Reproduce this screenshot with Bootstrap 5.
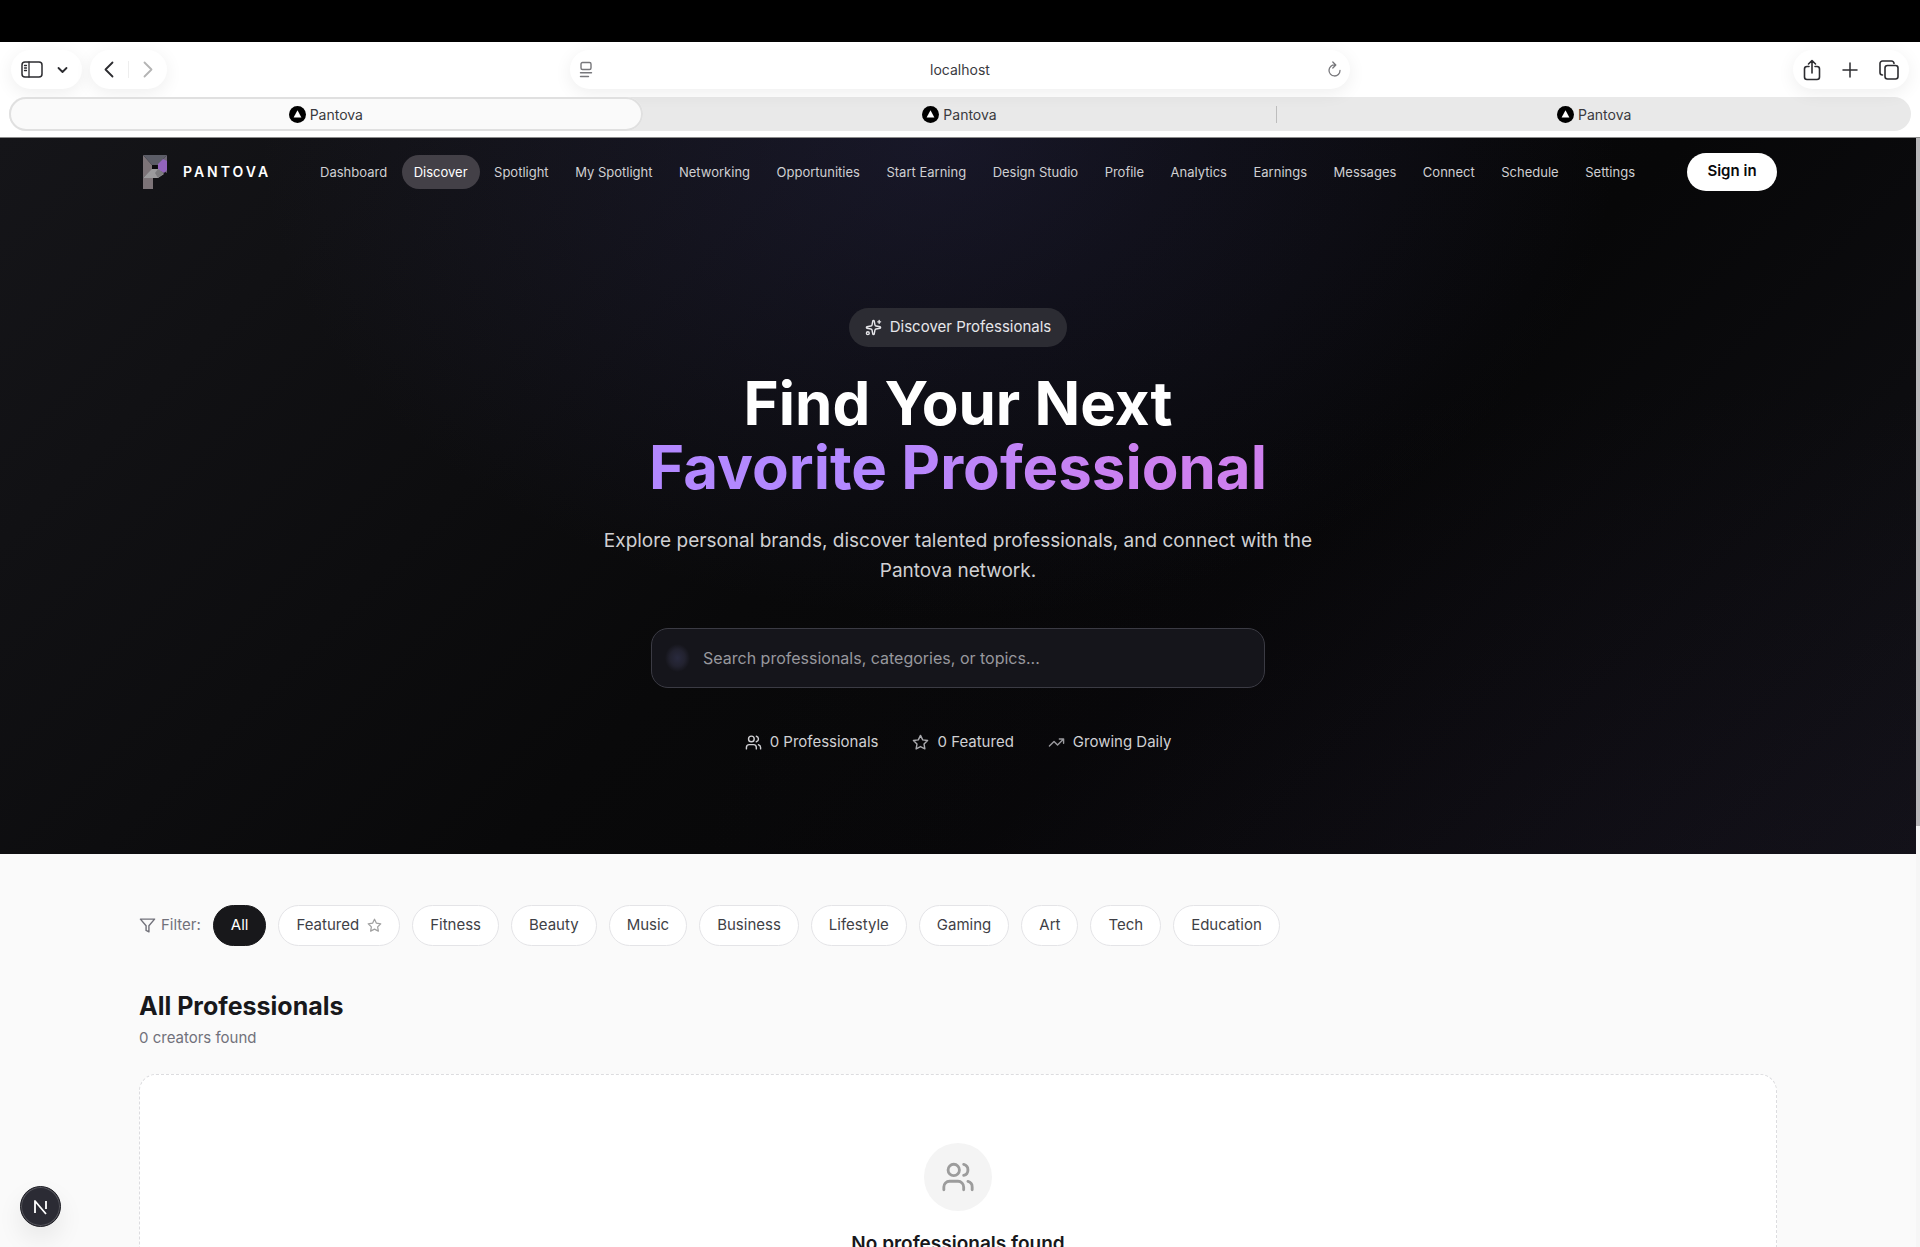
<!DOCTYPE html>
<html lang="en">
<head>
<meta charset="utf-8">
<meta name="viewport" content="width=device-width, initial-scale=1">
<title>Pantova</title>
<link href="https://cdn.jsdelivr.net/npm/bootstrap@5.3.0/dist/css/bootstrap.min.css" rel="stylesheet">
<style>
  body { font-family: "Inter", "Liberation Sans", sans-serif; background: #fafafa; color: #18181b; }
  button, input { font-family: inherit; }
  svg { flex: none; fill: none; stroke: currentColor; stroke-width: 2; stroke-linecap: round; stroke-linejoin: round; }

  /* Browser window */
  .screen-top { height: 42px; background: #000; }
  .browser-bar { background: #fff; color: #2c2c30; height: 96px; padding: 8px 9px 6px; border-bottom: 1px solid #8b8b8b; }
  .tool-row { display: grid; grid-template-columns: 1fr 780px 1fr; height: 39px; padding: 0 2px; }
  .tool-pill { background: #fff; border-radius: 20px; height: 39px; box-shadow: 0 4px 18px rgba(0,0,0,.07); }
  .tool-pill button { border: 0; background: none; padding: 0; color: inherit; display: flex; }
  .pill-side { width: 71px; padding: 0 14px 0 10px; }
  .pill-back { width: 77px; padding: 0 14px; }
  .pill-tools { width: 116px; padding: 0 10px; }
  .address-text { border: 0; background: none; text-align: center; font-size: 14px; color: #3a3a3e; min-width: 0; outline: 0; }
  .tab-strip { background: #e9e9e9; border-radius: 17px; height: 34px; margin-top: 8px; }
  .tab-item { flex: 1 1 0; font-size: 14px; color: #3a3a3e; text-decoration: none; border-radius: 17px; }
  .tab-item.current { background: #fafafa; box-shadow: inset 0 0 0 2px #e0e0e0; }
  .tab-rule { width: 1px; height: 17px; background: #bdbdbd; }

  /* Page */
  .page-wrap { max-width: 1638px; margin: 0 auto; width: 100%; }
  .scroll-track { width: 4px; background: #f6f6f6; }
  .scroll-thumb { height: 688px; background: #b9b8ba; }
  .hero-band { height: 716px; color: #fff;
    background:
      radial-gradient(ellipse 680px 480px at 49% 0, rgba(60,58,120,.25), transparent),
      radial-gradient(ellipse 1000px 480px at 88% 100%, rgba(50,25,80,.07), transparent),
      linear-gradient(135deg, #151519 0, #09090a 46%, #070708 64%, #111116 100%); }
  .site-bar { height: 67px; }
  .wordmark { font-size: 14px; font-weight: 600; letter-spacing: 3px; color: #fff; }
  .site-links { margin-left: 37px; margin-right: 40px; }
  .site-links a { font-size: 13px; line-height: 34px; padding: 0 12px; border-radius: 17px; color: #cfcfd2; text-decoration: none; white-space: nowrap; }
  .site-links a.current { background: #434047; color: #fff; }
  .signin-btn { background: #fff; color: #09090b; height: 38px; width: 90px; border-radius: 19px; border: 0; font-size: 15px; font-weight: 600; }
  .hero-body { padding-top: 103px; }
  .hero-tag { height: 39px; padding: 0 16px; border-radius: 20px; background: #2c2c33; color: #e6e6ea; font-size: 15px; gap: 8px; }
  .hero-title { font-size: 60px; line-height: 64px; font-weight: 700; margin: 24px 0 0; }
  .hero-title span { background: linear-gradient(90deg, #b388ff 0, #b388ff 35%, #cc80ef 80%, #cf80ee 100%); -webkit-background-clip: text; background-clip: text; color: transparent; }
  .hero-sub { max-width: 720px; font-size: 19px; line-height: 30px; margin: 27px 0 0; color: #d0d0d3; }
  .search-box { width: 614px; max-width: 100%; height: 60px; border: 1px solid #3b3b44; border-radius: 17px; background: #15151b; margin-top: 42px; padding: 0 17px 0 13px; gap: 11px; }
  .search-box input { flex: 1; background: none; border: 0; outline: 0; color: #fff; font-size: 16px; }
  .search-box input::placeholder { color: #98989e; opacity: 1; }
  .search-glow { width: 25px; height: 28px; border-radius: 50%; background: radial-gradient(closest-side, #292a3e, #22222f 60%, transparent); }
  .hero-stats { margin-top: 43px; gap: 34px; font-size: 15px; line-height: 22px; color: #d0d0d3; }
  .hero-stats div { gap: 8px; }

  .listing { padding-top: 51px; }
  .filter-row { gap: 12px; }
  .filter-label { font-size: 15px; color: #71717a; gap: 5px; }
  .filter-btn { height: 41px; padding: 0 17px; border-radius: 21px; border: 1px solid #e4e4e7; background: #fff; color: #3f3f46; font-size: 15px; gap: 8px; }
  .filter-btn.current { background: #18181b; border-color: #18181b; color: #fff; }
  .list-title { font-size: 25px; line-height: 34px; font-weight: 700; margin: 43px 0 0; }
  .list-count { font-size: 15px; line-height: 22px; margin: 4px 0 0; color: #71717a; }
  .empty-card { background: #fff; border: 1px dashed #dcdcdf; border-radius: 17px; margin-top: 25px; padding: 68px 0; }
  .empty-icon { width: 68px; height: 68px; border-radius: 50%; background: #f4f4f4; color: #9c9c9c; }
  .empty-title { font-size: 19px; line-height: 30px; font-weight: 600; margin: 18px 0 0; }
  .dev-badge { position: fixed; left: 20px; bottom: 20px; width: 41px; height: 41px; border-radius: 50%; border: 1px solid #1f1f26; background: #2b2b34; color: #fff; padding: 0; box-shadow: inset 0 0 0 1px #55555c, 0 12px 26px rgba(0,0,0,.08); }
</style>
</head>
<body class="vh-100 overflow-hidden d-flex flex-column">
<svg width="0" height="0" class="position-absolute" aria-hidden="true">
  <symbol id="users" viewBox="0 0 24 24"><path d="M16 21v-2a4 4 0 0 0-4-4H6a4 4 0 0 0-4 4v2"/><circle cx="9" cy="7" r="4"/><path d="M22 21v-2a4 4 0 0 0-3-3.87M16 3.13a4 4 0 0 1 0 7.75"/></symbol>
  <symbol id="star" viewBox="0 0 24 24"><path d="M12 2l3.09 6.26L22 9.27l-5 4.87 1.18 6.88L12 17.77l-6.18 3.25L7 14.14 2 9.27l6.91-1.01z"/></symbol>
  <symbol id="favicon" viewBox="0 0 17 17"><circle cx="8.5" cy="8.5" r="8.5" fill="#000" stroke="none"/><path d="M8.500 4.300l3.900 7.200h-7.800z" fill="#fff" stroke="none"/></symbol>
</svg>

<div class="screen-top flex-shrink-0"></div>
<header class="browser-bar flex-shrink-0">
  <div class="tool-row">
    <div class="d-flex gap-2">
      <div class="tool-pill pill-side d-flex align-items-center justify-content-between">
        <button aria-label="Sidebar"><svg width="22" height="17" viewBox="0 0 22 17"><rect x="1" y="1" width="20" height="15" rx="3" stroke-width="1.500"/><path d="M8 1v15M3.500 4.500h2M3.500 7h2M3.500 9.500h2" stroke-width="1.300"/></svg></button>
        <button aria-label="Tab groups"><svg width="11" height="8" viewBox="0 0 11 8"><path d="M1.500 2l4 4 4-4" stroke-width="1.800"/></svg></button>
      </div>
      <div class="tool-pill pill-back d-flex align-items-center justify-content-between">
        <button aria-label="Back"><svg width="10" height="17" viewBox="0 0 10 17"><path d="M8.500 1.500l-7 7 7 7" stroke-width="1.800"/></svg></button>
        <span class="tab-rule opacity-25"></span>
        <button aria-label="Forward"><svg width="10" height="17" viewBox="0 0 10 17"><path d="M1.500 1.500l7 7-7 7" stroke="#b4b4b4" stroke-width="1.800"/></svg></button>
      </div>
    </div>
    <div class="tool-pill d-flex align-items-center px-2">
      <button aria-label="Page menu"><svg width="15" height="17" viewBox="0 0 15 17" color="#77777b"><path d="M4.500 1.500h7a1.500 1.500 0 0 1 1.500 1.500v4a1.500 1.500 0 0 1-1.500 1.500h-7A1.500 1.500 0 0 1 3 7V3a1.500 1.500 0 0 1 1.500-1.500zM2.500 11.800h11M2.500 15.500h8" stroke-width="1.400"/></svg></button>
      <input class="address-text flex-fill" type="text" value="localhost" aria-label="Address">
      <button aria-label="Reload"><svg width="15" height="17" viewBox="0 0 15 17" color="#77777b"><path d="M13 9.500A5.500 5.500 0 1 1 8 4M5.800 1l3 3-3 3" stroke-width="1.300"/></svg></button>
    </div>
    <div class="d-flex justify-content-end">
      <div class="tool-pill pill-tools d-flex align-items-center justify-content-between">
        <button aria-label="Share"><svg width="18" height="22" viewBox="0 0 18 22"><path d="M6 7.500H4A2.500 2.500 0 0 0 1.500 10v8A2.500 2.500 0 0 0 4 20.500h10a2.500 2.500 0 0 0 2.500-2.500v-8A2.500 2.500 0 0 0 14 7.500h-2M9 14V1.500M5.500 5L9 1.500 12.500 5" stroke-width="1.600"/></svg></button>
        <button aria-label="New tab"><svg width="16" height="16" viewBox="0 0 16 16"><path d="M8 1v14M1 8h14" stroke-width="1.500"/></svg></button>
        <button aria-label="Tab overview"><svg width="20" height="20" viewBox="0 0 20 20"><rect x="6" y="5.500" width="13" height="13.500" rx="2.500" stroke-width="1.600"/><path d="M3.500 15A2.500 2.500 0 0 1 1 12.500V3.500A2.500 2.500 0 0 1 3.500 1h9A2.500 2.500 0 0 1 15 3.500" stroke-width="1.600"/></svg></button>
      </div>
    </div>
  </div>
  <nav class="tab-strip d-flex align-items-center" aria-label="Tabs">
    <a href="#" class="tab-item current h-100 d-flex align-items-center justify-content-center gap-1"><svg width="17" height="17"><use href="#favicon"/></svg>Pantova</a>
    <a href="#" class="tab-item h-100 d-flex align-items-center justify-content-center gap-1"><svg width="17" height="17"><use href="#favicon"/></svg>Pantova</a>
    <span class="tab-rule"></span>
    <a href="#" class="tab-item h-100 d-flex align-items-center justify-content-center gap-1"><svg width="17" height="17"><use href="#favicon"/></svg>Pantova</a>
  </nav>
</header>

<div class="d-flex flex-fill overflow-hidden">
  <main class="flex-fill overflow-hidden">
    <section class="hero-band">
      <div class="site-bar page-wrap d-flex align-items-center">
        <a href="#" class="d-flex align-items-center text-decoration-none ps-1">
          <svg width="24" height="34" viewBox="0 0 24 34" class="me-3">
            <g stroke="none"><path d="M0 0l9 10v5L0 23z" fill="#7d7478"/><path d="M0 0h24l-9 10H9z" fill="#5c5d67"/><path d="M24 0v18l-9-5v-3z" fill="#6d6775"/><path d="M20 4l4 2v9l-3 3-6-3V9z" fill="#9364bd"/><path d="M9 14h6l6 5-6 4H0z" fill="#9c9b9d"/><path d="M15 14l6 4-6 5-3-5z" fill="#7c7b7e"/><path d="M9 10h5v4H9z" fill="#0c0c0f"/><path d="M0 23h10v11H0z" fill="#7d7478"/></g>
          </svg>
          <span class="wordmark">PANTOVA</span>
        </a>
        <nav class="site-links d-flex flex-fill justify-content-between" aria-label="Main">
          <a href="#">Dashboard</a><a href="#" class="current">Discover</a><a href="#">Spotlight</a><a href="#">My Spotlight</a><a href="#">Networking</a><a href="#">Opportunities</a><a href="#">Start Earning</a><a href="#">Design Studio</a><a href="#">Profile</a><a href="#">Analytics</a><a href="#">Earnings</a><a href="#">Messages</a><a href="#">Connect</a><a href="#">Schedule</a><a href="#">Settings</a>
        </nav>
        <button class="signin-btn flex-shrink-0">Sign in</button>
      </div>
      <div class="hero-body d-flex flex-column align-items-center text-center">
        <div class="hero-tag d-flex align-items-center">
          <svg width="17" height="17" viewBox="0 0 24 24"><path d="M11.017 2.814a1 1 0 0 1 1.966 0l1.051 5.558a2 2 0 0 0 1.594 1.594l5.558 1.051a1 1 0 0 1 0 1.966l-5.558 1.051a2 2 0 0 0-1.594 1.594l-1.051 5.558a1 1 0 0 1-1.966 0l-1.051-5.558a2 2 0 0 0-1.594-1.594l-5.558-1.051a1 1 0 0 1 0-1.966l5.558-1.051a2 2 0 0 0 1.594-1.594zM20 2v4M22 4h-4"/><circle cx="4" cy="20" r="2"/></svg>
          Discover Professionals
        </div>
        <h1 class="hero-title">Find Your Next<br><span>Favorite Professional</span></h1>
        <p class="hero-sub">Explore personal brands, discover talented professionals, and connect with the Pantova network.</p>
        <div class="search-box d-flex align-items-center">
          <span class="search-glow"></span>
          <input type="search" placeholder="Search professionals, categories, or topics..." aria-label="Search professionals">
        </div>
        <div class="hero-stats d-flex">
          <div class="d-flex align-items-center"><svg width="17" height="17"><use href="#users"/></svg>0 Professionals</div>
          <div class="d-flex align-items-center"><svg width="17" height="17" color="#aaaaae"><use href="#star"/></svg>0 Featured</div>
          <div class="d-flex align-items-center"><svg width="17" height="17" viewBox="0 0 24 24" color="#9a9a9e"><path d="M22 7l-8.500 8.500-5-5L2 17M16 7h6v6"/></svg>Growing Daily</div>
        </div>
      </div>
    </section>

    <section class="listing page-wrap">
      <div class="filter-row d-flex align-items-center">
        <span class="filter-label d-flex align-items-center"><svg width="17" height="17" viewBox="0 0 24 24"><path d="M22 3H2l8 9.460V19l4 2v-8.540z"/></svg>Filter:</span>
        <button class="filter-btn current">All</button>
        <button class="filter-btn d-flex align-items-center">Featured <svg width="15" height="15" color="#a0a0a0"><use href="#star"/></svg></button>
        <button class="filter-btn">Fitness</button>
        <button class="filter-btn">Beauty</button>
        <button class="filter-btn">Music</button>
        <button class="filter-btn">Business</button>
        <button class="filter-btn">Lifestyle</button>
        <button class="filter-btn">Gaming</button>
        <button class="filter-btn">Art</button>
        <button class="filter-btn">Tech</button>
        <button class="filter-btn">Education</button>
      </div>
      <h2 class="list-title">All Professionals</h2>
      <p class="list-count">0 creators found</p>
      <div class="empty-card d-flex flex-column align-items-center">
        <div class="empty-icon d-flex align-items-center justify-content-center"><svg width="34" height="34"><use href="#users"/></svg></div>
        <h3 class="empty-title">No professionals found</h3>
      </div>
    </section>
  </main>
  <div class="scroll-track flex-shrink-0"><div class="scroll-thumb"></div></div>
</div>
<button class="dev-badge d-flex align-items-center justify-content-center" aria-label="Developer tools"><svg width="15" height="16" viewBox="0 0 15 16"><path d="M2 14V2l11 13M13 2v8" stroke-width="1.800" stroke-linecap="butt"/></svg></button>
<script src="https://cdn.jsdelivr.net/npm/bootstrap@5.3.0/dist/js/bootstrap.bundle.min.js"></script>
</body>
</html>
